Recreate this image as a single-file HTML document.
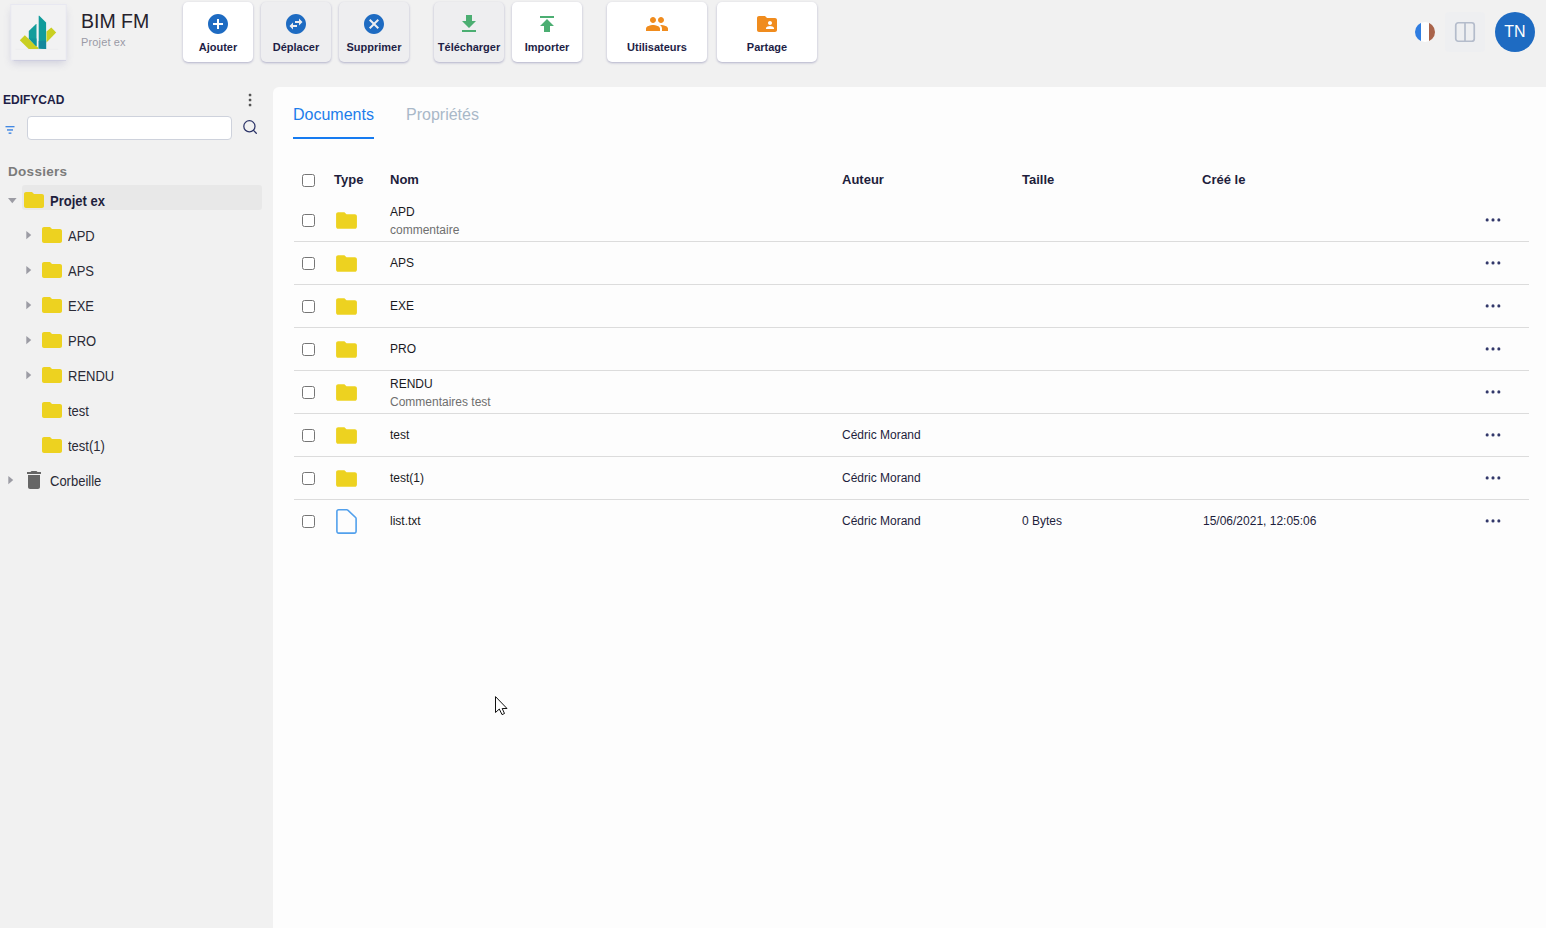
<!DOCTYPE html>
<html lang="fr">
<head>
<meta charset="utf-8">
<title>BIM FM</title>
<style>
*{box-sizing:border-box;margin:0;padding:0}
html,body{width:1546px;height:928px;overflow:hidden}
body{background:#f1f1f1;font-family:"Liberation Sans",Arial,sans-serif;color:#1e1e3c;position:relative}
.abs{position:absolute}
svg{display:block;overflow:visible}
.logo{left:11px;top:5px;width:55px;height:55px;background:#f2f2f3;box-shadow:0 1px 1px -.5px rgba(90,90,150,.3),0 4px 8px -1px rgba(90,90,150,.24)}
.title{left:81px;top:10px;font-size:19.5px;color:#26222c;white-space:nowrap}
.sub{left:81px;top:36px;font-size:11px;color:#9a9aa6;white-space:nowrap;letter-spacing:.15px}
.btn{position:absolute;top:2px;height:60px;border-radius:5px;background:#fff;box-shadow:0 1px 2px rgba(60,60,130,.22),0 1px 3px rgba(60,60,120,.14);text-align:center}
.btn.dis{background:#eeeef0}
.btn span{position:absolute;left:0;right:0;top:39px;font-size:11px;font-weight:bold;color:#1e1e46;white-space:nowrap}
.btn svg{position:absolute;left:50%;top:10px;margin-left:-12px;width:24px;height:24px}
.main{left:273px;top:87px;width:1273px;height:841px;background:#fdfdfd;border-top-left-radius:6px}
.side-h{left:3px;top:93px;font-size:12px;font-weight:bold;color:#1e1e46;white-space:nowrap}
.inp{left:27px;top:116px;width:205px;height:24px;background:#fff;border:1px solid #ced2dc;border-radius:4px}
.dos{left:8px;top:164.4px;line-height:16px;font-size:13.5px;letter-spacing:.3px;font-weight:bold;color:#7b7b7b;white-space:nowrap}
.sel{left:22px;top:185px;width:240px;height:25px;background:#e8e8e8;border-radius:3px}
.tn{position:absolute;font-size:13px;color:#2a2a36;white-space:nowrap;line-height:16px;transform:scaleY(1.07);transform-origin:0 12.5px}
.tn.b{font-weight:bold;font-size:13px;color:#1e1e3c}
.tab{position:absolute;top:106px;font-size:16px;white-space:nowrap;line-height:18px}
.th{position:absolute;top:172px;font-size:13px;font-weight:bold;color:#1e1e3c;white-space:nowrap;line-height:15px}
.cb{position:absolute;left:302px;width:13px;height:13px;border:1px solid #767676;border-radius:2.5px;background:#fff}
.sepr{position:absolute;left:294px;width:1235px;height:1px;background:#dcdcdc}
.nm{position:absolute;left:390px;font-size:12px;color:#1a1a1e;white-space:nowrap;line-height:14px}
.cm{position:absolute;left:390px;font-size:12px;color:#6f6f6f;white-space:nowrap;line-height:14px}
.au{position:absolute;font-size:12px;color:#1e1e3c;white-space:nowrap;line-height:14px}
.ic{position:absolute}
</style>
</head>
<body>
<div class="abs logo"></div>
<svg class="abs" style="left:0;top:0" width="80" height="70" viewBox="0 0 80 70">
<rect x="10.8" y="4.5" width="55.4" height="55.6" fill="#f2f2f3" stroke="#e6e6f1" stroke-width=".8"/>
<path d="M15.6 49.4h42.6" stroke="#eaeaec" stroke-width=".6"/>
<polygon points="19.8,40.3 24.8,35.2 38.5,47.9 38.5,49 28.7,49" fill="#c9cf22"/>
<polygon points="51.3,27.5 56.2,32.6 46.5,42.4 46.5,31.6" fill="#c9cf22"/>
<polygon points="36,24 36.5,24 36.5,46 36,45.9 28.8,38.6 28.8,31" fill="#129d9b"/>
<polygon points="28.8,38.6 36.5,38.6 36.5,46 36,45.9" fill="#0f9499"/>
<polygon points="38.7,15.8 39.3,15.8 46.1,22.4 46.1,49.1 38.7,48.6" fill="#109b9b"/>
<polygon points="38.7,40.9 46.1,40.5 46.1,49.1 38.7,48.6" fill="#13889c"/>
</svg>
<div class="abs title">BIM FM</div>
<div class="abs sub">Projet ex</div>
<div class="btn" style="left:183px;width:70px"><svg viewBox="0 0 24 24"><path fill="#1e6bc2" d="M12 2C6.48 2 2 6.48 2 12s4.48 10 10 10 10-4.48 10-10S17.52 2 12 2zm5 11h-4v4h-2v-4H7v-2h4V7h2v4h4v2z"/></svg><span>Ajouter</span></div>
<div class="btn dis" style="left:261px;width:70px"><svg viewBox="0 0 24 24"><path fill="#1e6bc2" d="M22 12c0-5.52-4.48-10-10-10S2 6.48 2 12s4.48 10 10 10 10-4.48 10-10zm-7-5.5l3.5 3.5-3.5 3.5V11h-4V9h4V6.5zm-6 11L5.5 14 9 10.5V13h4v2H9v2.5z"/></svg><span>Déplacer</span></div>
<div class="btn dis" style="left:339px;width:70px"><svg viewBox="0 0 24 24"><path fill="#1e6bc2" d="M12 2C6.47 2 2 6.47 2 12s4.47 10 10 10 10-4.47 10-10S17.53 2 12 2zm5 13.59L15.59 17 12 13.41 8.41 17 7 15.59 10.59 12 7 8.41 8.41 7 12 10.59 15.59 7 17 8.41 13.41 12 17 15.59z"/></svg><span>Supprimer</span></div>
<div class="btn dis" style="left:434px;width:70px"><svg viewBox="0 0 24 24"><path fill="#4cae72" d="M19 9h-4V3H9v6H5l7 7 7-7zM5 18v2h14v-2H5z"/></svg><span>Télécharger</span></div>
<div class="btn" style="left:512px;width:70px"><svg viewBox="0 0 24 24"><path fill="#4cae72" d="M5 4v2h14V4H5zm0 10h4v6h6v-6h4l-7-7-7 7z"/></svg><span>Importer</span></div>
<div class="btn" style="left:607px;width:100px"><svg viewBox="0 0 24 24"><path fill="#f08c1e" d="M16 11c1.66 0 2.99-1.34 2.99-3S17.66 5 16 5c-1.66 0-3 1.34-3 3s1.34 3 3 3zm-8 0c1.66 0 2.99-1.34 2.99-3S9.66 5 8 5C6.34 5 5 6.34 5 8s1.34 3 3 3zm0 2c-2.33 0-7 1.17-7 3.5V19h14v-2.5c0-2.33-4.67-3.5-7-3.5zm8 0c-.29 0-.62.02-.97.05 1.16.84 1.97 1.97 1.97 3.45V19h6v-2.5c0-2.33-4.67-3.5-7-3.5z"/></svg><span>Utilisateurs</span></div>
<div class="btn" style="left:717px;width:100px"><svg viewBox="0 0 24 24"><path fill="#f08c1e" d="M20 6h-8l-2-2H4c-1.1 0-1.99.9-1.99 2L2 18c0 1.1.9 2 2 2h16c1.1 0 2-.9 2-2V8c0-1.1-.9-2-2-2zm-5 3c1.1 0 2 .9 2 2s-.9 2-2 2-2-.9-2-2 .9-2 2-2zm4 8h-8v-1c0-1.33 2.67-2 4-2s4 .67 4 2v1z"/></svg><span>Partage</span></div>
<svg class="abs" style="left:1415px;top:22px" width="20" height="20" viewBox="0 0 20 20"><defs><clipPath id="fc"><circle cx="10" cy="10" r="10"/></clipPath></defs><g clip-path="url(#fc)"><rect x="0" y="0" width="6" height="20" fill="#2f7de1"/><rect x="6" y="0" width="8" height="20" fill="#fff"/><rect x="14" y="0" width="6" height="20" fill="#a9634a"/></g></svg>
<div class="abs" style="left:1445px;top:12px;width:40px;height:40px;background:#eeeff1;border-radius:4px"><svg class="abs" style="left:10px;top:10px" width="20" height="20" viewBox="0 0 20 20"><rect x="0.75" y="0.75" width="18.5" height="18.5" rx="2.5" fill="none" stroke="#b4bccb" stroke-width="1.7"/><path d="M10 1v18" stroke="#b4bccb" stroke-width="1.7"/></svg></div>
<div class="abs" style="left:1495px;top:12px;width:40px;height:40px;border-radius:50%;background:#1e6bc2;color:#fff;font-size:16px;line-height:40px;text-align:center">TN</div>
<div class="abs side-h">EDIFYCAD</div>
<svg class="abs" style="left:238px;top:88px" width="24" height="24" viewBox="0 0 24 24"><g fill="#555"><rect x="10.8" y="5.8" width="2.5" height="2.5" rx=".6"/><rect x="10.8" y="10.8" width="2.5" height="2.5" rx=".6"/><rect x="10.8" y="15.8" width="2.5" height="2.5" rx=".6"/></g></svg>
<svg class="abs" style="left:4px;top:124px" width="12" height="12" viewBox="0 0 12 12"><g fill="#2f7de1"><rect x="1.5" y="2.1" width="9" height="1.2"/><rect x="3" y="5.3" width="6" height="1.3"/><rect x="4.6" y="8.5" width="2.8" height="1.3"/></g></svg>
<div class="abs inp"></div>
<svg class="abs" style="left:240px;top:117px" width="20" height="20" viewBox="0 0 20 20"><circle cx="9.4" cy="9.3" r="5.6" fill="none" stroke="#2c3468" stroke-width="1.25"/><path d="M13.5 13.4l2.8 2.8" stroke="#2c3468" stroke-width="1.3" stroke-linecap="round"/></svg>
<div class="abs dos">Dossiers</div>
<div class="abs sel"></div>
<svg class="abs" style="left:7.7px;top:198px" width="8.6" height="5.4" viewBox="0 0 10 6"><path d="M0 0h10L5 6z" fill="#9c9ca4"/></svg>
<svg class="abs" style="left:22px;top:188px" width="24" height="24" viewBox="0 0 24 24"><path fill="#edd220" d="M10 4H4c-1.1 0-1.99.9-1.99 2L2 18c0 1.1.9 2 2 2h16c1.1 0 2-.9 2-2V8c0-1.1-.9-2-2-2h-8l-2-2z"/></svg>
<div class="tn b" style="left:50px;top:194px">Projet ex</div>
<svg class="abs" style="left:25.7px;top:231.1px" width="5.6" height="8.2" viewBox="0 0 6 10"><path d="M0 0v10L6 5z" fill="#9c9ca4"/></svg>
<svg class="abs" style="left:40px;top:223px" width="24" height="24" viewBox="0 0 24 24"><path fill="#edd220" d="M10 4H4c-1.1 0-1.99.9-1.99 2L2 18c0 1.1.9 2 2 2h16c1.1 0 2-.9 2-2V8c0-1.1-.9-2-2-2h-8l-2-2z"/></svg>
<div class="tn" style="left:68px;top:229.1px">APD</div>
<svg class="abs" style="left:25.7px;top:266.1px" width="5.6" height="8.2" viewBox="0 0 6 10"><path d="M0 0v10L6 5z" fill="#9c9ca4"/></svg>
<svg class="abs" style="left:40px;top:258px" width="24" height="24" viewBox="0 0 24 24"><path fill="#edd220" d="M10 4H4c-1.1 0-1.99.9-1.99 2L2 18c0 1.1.9 2 2 2h16c1.1 0 2-.9 2-2V8c0-1.1-.9-2-2-2h-8l-2-2z"/></svg>
<div class="tn" style="left:68px;top:264.1px">APS</div>
<svg class="abs" style="left:25.7px;top:301.1px" width="5.6" height="8.2" viewBox="0 0 6 10"><path d="M0 0v10L6 5z" fill="#9c9ca4"/></svg>
<svg class="abs" style="left:40px;top:293px" width="24" height="24" viewBox="0 0 24 24"><path fill="#edd220" d="M10 4H4c-1.1 0-1.99.9-1.99 2L2 18c0 1.1.9 2 2 2h16c1.1 0 2-.9 2-2V8c0-1.1-.9-2-2-2h-8l-2-2z"/></svg>
<div class="tn" style="left:68px;top:299.1px">EXE</div>
<svg class="abs" style="left:25.7px;top:336.1px" width="5.6" height="8.2" viewBox="0 0 6 10"><path d="M0 0v10L6 5z" fill="#9c9ca4"/></svg>
<svg class="abs" style="left:40px;top:328px" width="24" height="24" viewBox="0 0 24 24"><path fill="#edd220" d="M10 4H4c-1.1 0-1.99.9-1.99 2L2 18c0 1.1.9 2 2 2h16c1.1 0 2-.9 2-2V8c0-1.1-.9-2-2-2h-8l-2-2z"/></svg>
<div class="tn" style="left:68px;top:334.1px">PRO</div>
<svg class="abs" style="left:25.7px;top:371.1px" width="5.6" height="8.2" viewBox="0 0 6 10"><path d="M0 0v10L6 5z" fill="#9c9ca4"/></svg>
<svg class="abs" style="left:40px;top:363px" width="24" height="24" viewBox="0 0 24 24"><path fill="#edd220" d="M10 4H4c-1.1 0-1.99.9-1.99 2L2 18c0 1.1.9 2 2 2h16c1.1 0 2-.9 2-2V8c0-1.1-.9-2-2-2h-8l-2-2z"/></svg>
<div class="tn" style="left:68px;top:369.1px">RENDU</div>
<svg class="abs" style="left:40px;top:398px" width="24" height="24" viewBox="0 0 24 24"><path fill="#edd220" d="M10 4H4c-1.1 0-1.99.9-1.99 2L2 18c0 1.1.9 2 2 2h16c1.1 0 2-.9 2-2V8c0-1.1-.9-2-2-2h-8l-2-2z"/></svg>
<div class="tn" style="left:68px;top:404.1px">test</div>
<svg class="abs" style="left:40px;top:433px" width="24" height="24" viewBox="0 0 24 24"><path fill="#edd220" d="M10 4H4c-1.1 0-1.99.9-1.99 2L2 18c0 1.1.9 2 2 2h16c1.1 0 2-.9 2-2V8c0-1.1-.9-2-2-2h-8l-2-2z"/></svg>
<div class="tn" style="left:68px;top:439.1px">test(1)</div>
<svg class="abs" style="left:7.7px;top:476.1px" width="5.6" height="8.2" viewBox="0 0 6 10"><path d="M0 0v10L6 5z" fill="#9c9ca4"/></svg>
<svg class="abs" style="left:22px;top:468px" width="24" height="24" viewBox="0 0 24 24"><path fill="#666" d="M6 19c0 1.1.9 2 2 2h8c1.1 0 2-.9 2-2V7H6v12zM19 4h-3.5l-1-1h-5l-1 1H5v2h14V4z"/></svg>
<div class="tn" style="left:50px;top:474.1px">Corbeille</div>
<div class="abs main"></div>
<div class="tab" style="left:293px;color:#1c7deb">Documents</div>
<div class="abs" style="left:293px;top:137px;width:81px;height:2px;background:#167bf0"></div>
<div class="tab" style="left:406px;color:#a9b8c8">Propriétés</div>
<div class="cb" style="top:174px"></div>
<div class="th" style="left:334px">Type</div>
<div class="th" style="left:390px">Nom</div>
<div class="th" style="left:842px">Auteur</div>
<div class="th" style="left:1022px">Taille</div>
<div class="th" style="left:1202px">Créé le</div>
<div class="cb" style="top:214px"></div>
<svg class="abs" style="left:334px;top:208.2px" width="25" height="25" viewBox="0 0 24 24"><path fill="#edd220" d="M10 4H4c-1.1 0-1.99.9-1.99 2L2 18c0 1.1.9 2 2 2h16c1.1 0 2-.9 2-2V8c0-1.1-.9-2-2-2h-8l-2-2z"/></svg>
<div class="nm" style="top:205px">APD</div>
<div class="cm" style="top:223px">commentaire</div>
<svg class="abs" style="left:1485px;top:218px" width="16" height="4" viewBox="0 0 16 4"><g fill="#32386a"><circle cx="2.15" cy="1.9" r="1.55"/><circle cx="8" cy="1.9" r="1.55"/><circle cx="13.85" cy="1.9" r="1.55"/></g></svg>
<div class="sepr" style="top:241px"></div>
<div class="cb" style="top:257px"></div>
<svg class="abs" style="left:334px;top:251.2px" width="25" height="25" viewBox="0 0 24 24"><path fill="#edd220" d="M10 4H4c-1.1 0-1.99.9-1.99 2L2 18c0 1.1.9 2 2 2h16c1.1 0 2-.9 2-2V8c0-1.1-.9-2-2-2h-8l-2-2z"/></svg>
<div class="nm" style="top:256px">APS</div>
<svg class="abs" style="left:1485px;top:261px" width="16" height="4" viewBox="0 0 16 4"><g fill="#32386a"><circle cx="2.15" cy="1.9" r="1.55"/><circle cx="8" cy="1.9" r="1.55"/><circle cx="13.85" cy="1.9" r="1.55"/></g></svg>
<div class="sepr" style="top:284px"></div>
<div class="cb" style="top:300px"></div>
<svg class="abs" style="left:334px;top:294.2px" width="25" height="25" viewBox="0 0 24 24"><path fill="#edd220" d="M10 4H4c-1.1 0-1.99.9-1.99 2L2 18c0 1.1.9 2 2 2h16c1.1 0 2-.9 2-2V8c0-1.1-.9-2-2-2h-8l-2-2z"/></svg>
<div class="nm" style="top:299px">EXE</div>
<svg class="abs" style="left:1485px;top:304px" width="16" height="4" viewBox="0 0 16 4"><g fill="#32386a"><circle cx="2.15" cy="1.9" r="1.55"/><circle cx="8" cy="1.9" r="1.55"/><circle cx="13.85" cy="1.9" r="1.55"/></g></svg>
<div class="sepr" style="top:327px"></div>
<div class="cb" style="top:343px"></div>
<svg class="abs" style="left:334px;top:337.2px" width="25" height="25" viewBox="0 0 24 24"><path fill="#edd220" d="M10 4H4c-1.1 0-1.99.9-1.99 2L2 18c0 1.1.9 2 2 2h16c1.1 0 2-.9 2-2V8c0-1.1-.9-2-2-2h-8l-2-2z"/></svg>
<div class="nm" style="top:342px">PRO</div>
<svg class="abs" style="left:1485px;top:347px" width="16" height="4" viewBox="0 0 16 4"><g fill="#32386a"><circle cx="2.15" cy="1.9" r="1.55"/><circle cx="8" cy="1.9" r="1.55"/><circle cx="13.85" cy="1.9" r="1.55"/></g></svg>
<div class="sepr" style="top:370px"></div>
<div class="cb" style="top:386px"></div>
<svg class="abs" style="left:334px;top:380.2px" width="25" height="25" viewBox="0 0 24 24"><path fill="#edd220" d="M10 4H4c-1.1 0-1.99.9-1.99 2L2 18c0 1.1.9 2 2 2h16c1.1 0 2-.9 2-2V8c0-1.1-.9-2-2-2h-8l-2-2z"/></svg>
<div class="nm" style="top:377px">RENDU</div>
<div class="cm" style="top:395px">Commentaires test</div>
<svg class="abs" style="left:1485px;top:390px" width="16" height="4" viewBox="0 0 16 4"><g fill="#32386a"><circle cx="2.15" cy="1.9" r="1.55"/><circle cx="8" cy="1.9" r="1.55"/><circle cx="13.85" cy="1.9" r="1.55"/></g></svg>
<div class="sepr" style="top:413px"></div>
<div class="cb" style="top:429px"></div>
<svg class="abs" style="left:334px;top:423.2px" width="25" height="25" viewBox="0 0 24 24"><path fill="#edd220" d="M10 4H4c-1.1 0-1.99.9-1.99 2L2 18c0 1.1.9 2 2 2h16c1.1 0 2-.9 2-2V8c0-1.1-.9-2-2-2h-8l-2-2z"/></svg>
<div class="nm" style="top:428px">test</div>
<div class="au" style="left:842px;top:428px">Cédric Morand</div>
<svg class="abs" style="left:1485px;top:433px" width="16" height="4" viewBox="0 0 16 4"><g fill="#32386a"><circle cx="2.15" cy="1.9" r="1.55"/><circle cx="8" cy="1.9" r="1.55"/><circle cx="13.85" cy="1.9" r="1.55"/></g></svg>
<div class="sepr" style="top:456px"></div>
<div class="cb" style="top:472px"></div>
<svg class="abs" style="left:334px;top:466.2px" width="25" height="25" viewBox="0 0 24 24"><path fill="#edd220" d="M10 4H4c-1.1 0-1.99.9-1.99 2L2 18c0 1.1.9 2 2 2h16c1.1 0 2-.9 2-2V8c0-1.1-.9-2-2-2h-8l-2-2z"/></svg>
<div class="nm" style="top:471px">test(1)</div>
<div class="au" style="left:842px;top:471px">Cédric Morand</div>
<svg class="abs" style="left:1485px;top:476px" width="16" height="4" viewBox="0 0 16 4"><g fill="#32386a"><circle cx="2.15" cy="1.9" r="1.55"/><circle cx="8" cy="1.9" r="1.55"/><circle cx="13.85" cy="1.9" r="1.55"/></g></svg>
<div class="sepr" style="top:499px"></div>
<div class="cb" style="top:515px"></div>
<svg class="abs" style="left:335px;top:508px" width="24" height="28" viewBox="0 0 24 28"><path d="M3.7 1.7h8.1q.6 0 1 .4l7.8 7.4q.5.5.5 1.2v12.6a1.8 1.8 0 0 1-1.8 1.8H3.7a1.8 1.8 0 0 1-1.8-1.8V3.5a1.8 1.8 0 0 1 1.8-1.8z" fill="none" stroke="#52a0ec" stroke-width="1.6"/></svg>
<div class="nm" style="top:514px">list.txt</div>
<div class="au" style="left:842px;top:514px">Cédric Morand</div>
<div class="au" style="left:1022px;top:514px">0 Bytes</div>
<div class="au" style="left:1203px;top:514px">15/06/2021, 12:05:06</div>
<svg class="abs" style="left:1485px;top:519px" width="16" height="4" viewBox="0 0 16 4"><g fill="#32386a"><circle cx="2.15" cy="1.9" r="1.55"/><circle cx="8" cy="1.9" r="1.55"/><circle cx="13.85" cy="1.9" r="1.55"/></g></svg>
<svg class="abs" style="left:494px;top:696px" width="16" height="22" viewBox="0 0 16 22"><path d="M1.5 .6V16.5L5.3 13 8 18.6l2.5-1.1-2.3-5H13z" fill="#fff" stroke="#111" stroke-width="1" stroke-linejoin="miter"/></svg>
</body>
</html>
